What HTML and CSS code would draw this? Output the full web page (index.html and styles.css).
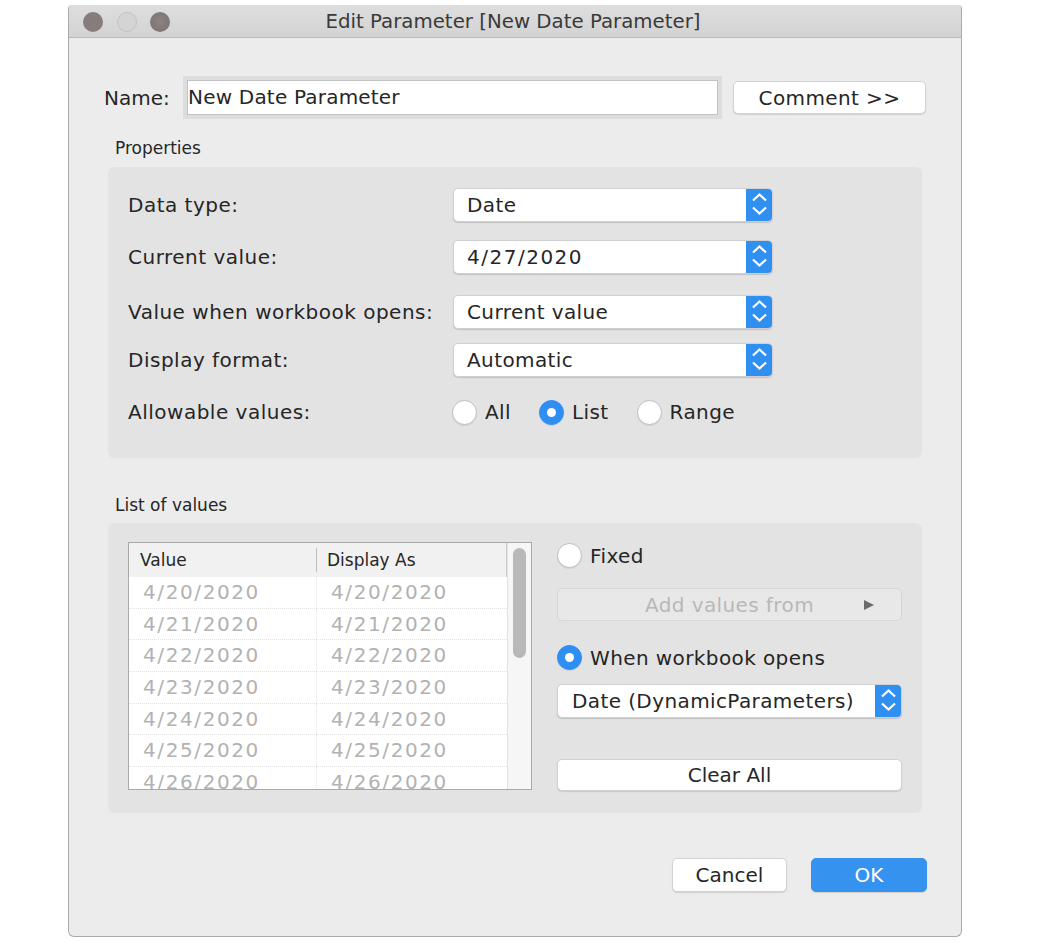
FILE: index.html
```html
<!DOCTYPE html>
<html>
<head>
<meta charset="utf-8">
<link rel="stylesheet" href="styles.css">
</head>
<body>
<div class="window">
  <div class="titlebar">
    <div class="lights">
      <span class="light light-close"></span>
      <span class="light light-min"></span>
      <span class="light light-max"></span>
    </div>
    <div class="title">Edit Parameter [New Date Parameter]</div>
    <div></div>
  </div>

  <div class="name-row">
    <span class="name-label">Name:</span>
    <div class="name-input">New Date Parameter</div>
    <div class="btn btn-comment">Comment &gt;&gt;</div>
  </div>

  <div class="section-label">Properties</div>
  <div class="group props">
    <div class="prop-row">
      <span class="prop-label">Data type:</span>
      <div class="select"><span class="select-text">Date</span><span class="stepper"><svg width="27" height="34" viewBox="0 0 27 34"><path d="M7 13.5 L13.5 7.5 L20 13.5 M7 20.5 L13.5 26.5 L20 20.5" fill="none" stroke="#fff" stroke-width="2.2"/></svg></span></div>
    </div>
    <div class="prop-row">
      <span class="prop-label">Current value:</span>
      <div class="select"><span class="select-text date">4/27/2020</span><span class="stepper"><svg width="27" height="34" viewBox="0 0 27 34"><path d="M7 13.5 L13.5 7.5 L20 13.5 M7 20.5 L13.5 26.5 L20 20.5" fill="none" stroke="#fff" stroke-width="2.2"/></svg></span></div>
    </div>
    <div class="prop-row prop-row-open">
      <span class="prop-label">Value when workbook opens:</span>
      <div class="select"><span class="select-text">Current value</span><span class="stepper"><svg width="27" height="34" viewBox="0 0 27 34"><path d="M7 13.5 L13.5 7.5 L20 13.5 M7 20.5 L13.5 26.5 L20 20.5" fill="none" stroke="#fff" stroke-width="2.2"/></svg></span></div>
    </div>
    <div class="prop-row prop-row-format">
      <span class="prop-label">Display format:</span>
      <div class="select"><span class="select-text">Automatic</span><span class="stepper"><svg width="27" height="34" viewBox="0 0 27 34"><path d="M7 13.5 L13.5 7.5 L20 13.5 M7 20.5 L13.5 26.5 L20 20.5" fill="none" stroke="#fff" stroke-width="2.2"/></svg></span></div>
    </div>
    <div class="prop-row">
      <span class="prop-label">Allowable values:</span>
      <div class="radios">
        <label class="radio"><span class="radio-dot"></span><span>All</span></label>
        <label class="radio"><span class="radio-dot on"></span><span>List</span></label>
        <label class="radio"><span class="radio-dot"></span><span>Range</span></label>
      </div>
    </div>
  </div>

  <div class="section-label section-label-list">List of values</div>
  <div class="group listbox">
    <div class="table">
      <div class="table-main">
        <div class="thead">
          <div class="th th-value">Value</div>
          <div class="th th-display">Display As</div>
        </div>
        <div class="tr"><div class="td c1">4/20/2020</div><div class="td c2">4/20/2020</div></div>
        <div class="tr"><div class="td c1">4/21/2020</div><div class="td c2">4/21/2020</div></div>
        <div class="tr"><div class="td c1">4/22/2020</div><div class="td c2">4/22/2020</div></div>
        <div class="tr"><div class="td c1">4/23/2020</div><div class="td c2">4/23/2020</div></div>
        <div class="tr"><div class="td c1">4/24/2020</div><div class="td c2">4/24/2020</div></div>
        <div class="tr"><div class="td c1">4/25/2020</div><div class="td c2">4/25/2020</div></div>
        <div class="tr"><div class="td c1">4/26/2020</div><div class="td c2">4/26/2020</div></div>
      </div>
      <div class="scrollbar"><div class="thumb"></div></div>
    </div>

    <div class="list-side">
      <label class="radio side-radio"><span class="radio-dot"></span><span>Fixed</span></label>
      <div class="btn btn-disabled"><span>Add values from</span><svg class="tri" width="12" height="12" viewBox="0 0 12 12"><path d="M1 1 L11 6 L1 11 Z" fill="#6b6b6b"/></svg></div>
      <label class="radio side-radio side-radio-2"><span class="radio-dot on"></span><span>When workbook opens</span></label>
      <div class="select select-wide"><span class="select-text">Date (DynamicParameters)</span><span class="stepper"><svg width="27" height="34" viewBox="0 0 27 34"><path d="M7 13.5 L13.5 7.5 L20 13.5 M7 20.5 L13.5 26.5 L20 20.5" fill="none" stroke="#fff" stroke-width="2.2"/></svg></span></div>
      <div class="btn btn-clear">Clear All</div>
    </div>
  </div>

  <div class="footer">
    <div class="btn btn-cancel">Cancel</div>
    <div class="btn btn-ok">OK</div>
  </div>
</div>
</body>
</html>
```

FILE: styles.css
```css
* { box-sizing: border-box; }

body {
  margin: 0;
  background: #ffffff;
  font-family: "DejaVu Sans", "Liberation Sans", sans-serif;
  color: #262626;
}

.window {
  margin: 5px 0 0 68px;
  width: 894px;
  height: 932px;
  background: #ececec;
  border: 1px solid #aaaaaa;
  border-top: none;
  border-radius: 4px 4px 6px 6px;
  display: flex;
  flex-direction: column;
}

.titlebar {
  height: 33px;
  background: linear-gradient(#dedede, #d3d3d3);
  border-bottom: 1px solid #b9b9b9;
  border-radius: 4px 4px 0 0;
  display: grid;
  grid-template-columns: 1fr auto 1fr;
  align-items: center;
}

.lights {
  display: flex;
  gap: 13.5px;
  padding-left: 14px;
  padding-top: 1px;
}

.light {
  width: 20px;
  height: 20px;
  border-radius: 50%;
  display: block;
}
.light-close { background: #877c7c; }
.light-min { background: #d4d4d4; border: 1px solid #c2c2c2; }
.light-max { background: radial-gradient(circle, #8c8282 0%, #7b7171 100%); }

.title {
  font-size: 19.8px;
  color: #3a3a3a;
  white-space: nowrap;
  padding-top: 1px;
  padding-right: 4px;
}

.name-row {
  display: flex;
  align-items: center;
  margin-top: 42px;
  padding: 0 35px;
  height: 35px;
}

.name-label {
  font-size: 20px;
  width: 83px;
}

.name-input {
  width: 531px;
  height: 35px;
  background: #ffffff;
  border: 1px solid #c2c2c2;
  box-shadow: 0 0 0 4px #dddddd;
  font-size: 20px;
  line-height: 33px;
  padding-left: 0;
  letter-spacing: 0.2px;
}

.btn {
  height: 33px;
  background: #ffffff;
  border: 1px solid #d2d2d2;
  border-radius: 5px;
  box-shadow: 0 1px 1px rgba(0,0,0,0.12);
  font-size: 20px;
  display: flex;
  align-items: center;
  justify-content: center;
  color: #262626;
}

.btn-comment {
  margin-left: auto;
  width: 193px;
  letter-spacing: 0.4px;
}

.section-label {
  font-size: 17px;
  line-height: 20px;
  margin: 23px 0 9px 46px;
}

.section-label-list {
  margin-top: 37px;
  margin-bottom: 8px;
}

.group {
  margin: 0 39px;
  background: #e3e3e3;
  border-radius: 6px;
}

.props {
  height: 291px;
  padding: 21px 20px 0;
  display: flex;
  flex-direction: column;
  gap: 18px;
}

.prop-row {
  display: flex;
  align-items: center;
  height: 34px;
}

.prop-row-open { margin-top: 3px; }
.prop-row-format { margin-top: -4px; }

.prop-label {
  width: 325px;
  font-size: 20px;
  letter-spacing: 0.5px;
}

.select {
  width: 320px;
  height: 34px;
  background: #ffffff;
  border: 1px solid #d0d0d0;
  border-radius: 5px;
  box-shadow: 0 1px 1px rgba(0,0,0,0.15);
  display: flex;
  align-items: center;
  overflow: hidden;
}

.select-text {
  flex: 1;
  padding-left: 13px;
  font-size: 20px;
  letter-spacing: 0.4px;
  white-space: nowrap;
}

.select-text.date { letter-spacing: 1.5px; }

.stepper {
  width: 27px;
  height: 34px;
  background: #3090f2;
  display: block;
  margin-right: -1px;
}

.stepper svg { display: block; margin-top: -1px; }

.radios {
  display: flex;
  align-items: center;
  margin-left: -1px;
}

.radio {
  display: flex;
  align-items: center;
  gap: 8px;
  font-size: 20px;
  margin-right: 28px;
  letter-spacing: 0.4px;
}

.radio-dot {
  width: 25px;
  height: 25px;
  border-radius: 50%;
  background: #ffffff;
  border: 1px solid #c0c0c0;
  box-shadow: 0 1px 1px rgba(0,0,0,0.08);
  display: block;
  position: relative;
}

.radio-dot.on {
  background: #2e8ef2;
  border-color: #2e8ef2;
}

.radio-dot.on::after {
  content: "";
  position: absolute;
  left: 50%;
  top: 50%;
  width: 9px;
  height: 9px;
  margin: -4.5px 0 0 -4.5px;
  border-radius: 50%;
  background: #ffffff;
}

.listbox {
  height: 290px;
  padding: 19px 20px 0;
  display: flex;
  gap: 25px;
}

.table {
  width: 404px;
  height: 248px;
  border: 1px solid #a9a9a9;
  background: #ffffff;
  display: flex;
  overflow: hidden;
}

.table-main {
  flex: 1;
  overflow: hidden;
}

.thead {
  height: 34px;
  background: #f1f1f1;
  display: flex;
  align-items: center;
  font-size: 17px;
  border-right: 1px solid #c8c8c8;
}

.th {
  height: 24px;
  line-height: 24px;
}

.th-value {
  width: 188px;
  padding-left: 11px;
  border-right: 1px solid #bdbdbd;
}

.th-display {
  padding-left: 10px;
}

.tr {
  height: 31.7px;
  display: flex;
  border-bottom: 1px dotted #e4e4e4;
  font-size: 20px;
  letter-spacing: 1.6px;
  color: #b2b2b2;
}

.td {
  line-height: 31px;
  white-space: nowrap;
}

.td.c1 {
  width: 188px;
  padding-left: 14px;
  border-right: 1px dotted #e4e4e4;
}

.td.c2 {
  padding-left: 14px;
}

.scrollbar {
  width: 24px;
  background: #f6f6f6;
  border-left: 1px solid #e2e2e2;
  padding: 5px 0 0 5px;
}

.thumb {
  width: 13px;
  height: 110px;
  border-radius: 7px;
  background: #b9b9b9;
}

.list-side {
  width: 345px;
  display: flex;
  flex-direction: column;
}

.side-radio {
  margin: 1px 0 0 0;
}

.btn-disabled {
  margin-top: 20px;
  background: #e8e8e8;
  border: 1px solid #d6d6d6;
  box-shadow: none;
  color: #b8b8b8;
  position: relative;
  letter-spacing: 0.4px;
}

.btn-disabled .tri {
  position: absolute;
  right: 26px;
  top: 10px;
}

.side-radio-2 {
  margin-top: 24px;
}

.select-wide {
  width: 345px;
  margin-top: 14px;
}

.select-wide .select-text {
  padding-left: 14px;
}

.btn-clear {
  margin-top: 41px;
  height: 32px;
}

.footer {
  display: flex;
  justify-content: flex-end;
  gap: 24px;
  margin-top: 45px;
  padding-right: 34px;
}

.btn-cancel {
  width: 115px;
  height: 34px;
}

.btn-ok {
  width: 116px;
  height: 34px;
  background: #3592ef;
  border-color: #3592ef;
  color: #ffffff;
}
```
